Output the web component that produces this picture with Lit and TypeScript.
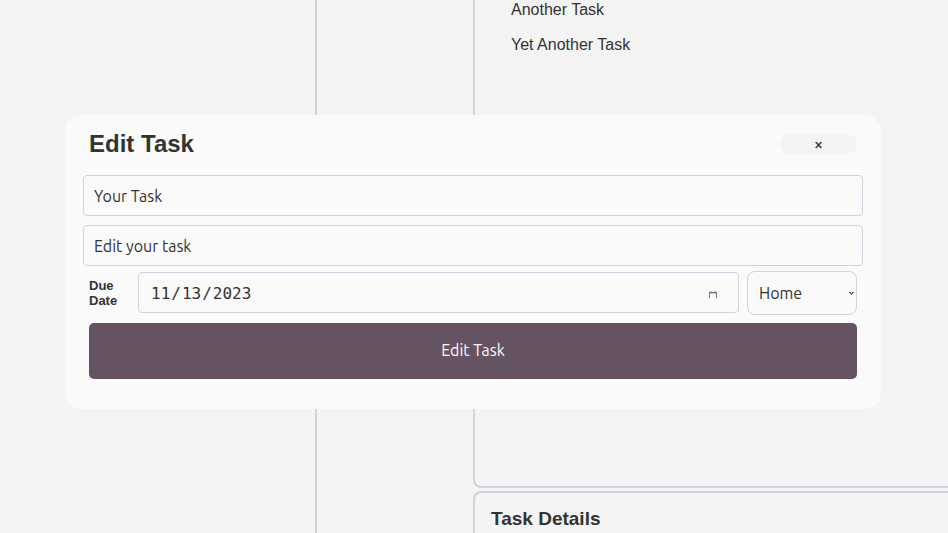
import { LitElement, html, css } from "lit";
import { customElement, property, state } from "lit/decorators.js";

@customElement("task-dialog")
class TaskDialog extends LitElement {
  @property() heading = "Edit Task";
  @state() private name = "Your Task";
  @state() private details = "Edit your task";
  @state() private due = "2023-11-13";

  static styles = css`
    :host {
      display: block;
      box-sizing: border-box;
      padding: 12px 24px 30px;
      border-radius: 16px;
      background: #fafafa;
      color: #333;
    }
    * {
      box-sizing: border-box;
    }
    input,
    select,
    button {
      margin: 0;
      font-family: Ubuntu, "Noto Sans", sans-serif;
      font-size: 16px;
      color: #333;
    }
    header {
      display: flex;
      align-items: center;
      justify-content: space-between;
      height: 34px;
    }
    h2 {
      margin: 0;
      font-size: 24px;
      line-height: 28px;
    }
    .close {
      display: grid;
      place-items: center;
      width: 10%;
      height: 20px;
      padding: 0;
      border: 0;
      border-radius: 10px;
      background: #f4f4f4;
      font-weight: 500;
      line-height: 20px;
    }
    .fields {
      display: grid;
      gap: 9px;
      margin: 14px -6px 5px;
    }
    .text {
      width: 100%;
      height: 41px;
      padding: 0 10px;
      border: 1px solid #d7cfdf;
      border-radius: 4px;
      background: #fafafa;
    }
    .row {
      display: flex;
      align-items: center;
      gap: 8px;
    }
    label {
      width: 41px;
      font-size: 13px;
      font-weight: bold;
      line-height: 15px;
    }
    .control {
      position: relative;
      display: flex;
    }
    .control svg {
      position: absolute;
      pointer-events: none;
    }
    .date {
      flex: 1;
      padding-bottom: 2px;
    }
    .date input {
      width: 100%;
      height: 41px;
      padding: 2px 11px 0;
      border: 1px solid #d7cfdf;
      border-radius: 4px;
      background: #fafafa;
      font-family: "DejaVu Sans Mono", monospace;
    }
    .date input::-webkit-calendar-picker-indicator {
      opacity: 0;
    }
    .date svg {
      right: 22px;
      top: 19px;
    }
    .list select {
      width: 110px;
      height: 44px;
      padding: 0 11px;
      border: 1px solid #d7cfdf;
      border-radius: 8px;
      background: #fafafa;
      appearance: none;
    }
    .list svg {
      right: 3px;
      top: 21px;
    }
    .submit {
      display: block;
      width: 100%;
      height: 56px;
      margin-top: 8px;
      padding: 0 0 2px;
      border: 0;
      border-radius: 5px;
      background: #655361;
      color: #fafafa;
    }
  `;

  render() {
    return html`
      <header>
        <h2>${this.heading}</h2>
        <button class="close" type="button" aria-label="Close">×</button>
      </header>
      <form @submit=${(e: Event) => e.preventDefault()}>
        <div class="fields">
          <input class="text" type="text" aria-label="Task name" .value=${this.name} />
          <input class="text" type="text" aria-label="Task details" .value=${this.details} />
        </div>
        <div class="row">
          <label for="due">Due Date</label>
          <div class="control date">
            <input id="due" type="date" .value=${this.due} />
            <svg width="8" height="7" viewBox="0 0 8 7" aria-hidden="true">
              <path d="M0 1h8v1H0z" fill="#777" />
              <path d="M.5 2v5M7.5 2v5" stroke="#777" />
              <path d="M1 .5h2M5 .5h2" stroke="#999" stroke-opacity=".6" />
              <path d="M1 2.5h6" stroke="#777" stroke-opacity=".35" />
            </svg>
          </div>
          <div class="control list">
            <select aria-label="Project">
              <option>Home</option>
            </select>
            <svg width="5" height="3" viewBox="0 0 5 3" aria-hidden="true">
              <path d="M0 0h2v1h1V0h2v1H4v1H3v1H2V2H1V1H0z" fill="#333" fill-opacity=".75" />
            </svg>
          </div>
        </div>
        <button class="submit" type="submit">Edit Task</button>
      </form>
    `;
  }
}

@customElement("app-root")
class AppRoot extends LitElement {
  @state() private tasks = ["Another Task", "Yet Another Task"];

  static styles = css`
    :host {
      display: block;
      height: 100vh;
      overflow: hidden;
      background: #f4f4f4;
      color: #333;
      font-family: "Liberation Sans", Arial, sans-serif;
      font-size: 16px;
    }
    .page {
      display: grid;
      grid-template-columns: 2fr 1fr 3fr;
      height: 100%;
    }
    .sidebar {
      border-right: 2px solid #d7cfdf;
      margin-right: -1px;
    }
    .content {
      grid-column: 3;
      display: grid;
      grid-template-rows: auto 1fr;
      gap: 3px;
      margin-left: -1px;
    }
    .panel {
      border: 2px solid #d7cfdf;
      border-right: 0;
      border-radius: 8px 0 0 8px;
    }
    .tasks {
      min-height: 488px;
      box-sizing: border-box;
      border-top: 0;
      border-top-left-radius: 0;
    }
    ul {
      display: grid;
      gap: 15px;
      margin: 0;
      padding: 0 36px;
      list-style: none;
      line-height: 20px;
    }
    h3 {
      margin: 16px;
      font-size: 19px;
      line-height: 20px;
    }
    .overlay {
      position: fixed;
      inset: 0;
      padding: 115px 67px 0 65px;
    }
  `;

  render() {
    return html`
      <div class="page">
        <aside class="sidebar"></aside>
        <main class="content">
          <section class="panel tasks">
            <ul>
              ${this.tasks.map((task) => html`<li>${task}</li>`)}
            </ul>
          </section>
          <section class="panel">
            <h3>Task Details</h3>
          </section>
        </main>
      </div>
      <div class="overlay" role="dialog" aria-label="Edit Task">
        <task-dialog></task-dialog>
      </div>
    `;
  }
}
